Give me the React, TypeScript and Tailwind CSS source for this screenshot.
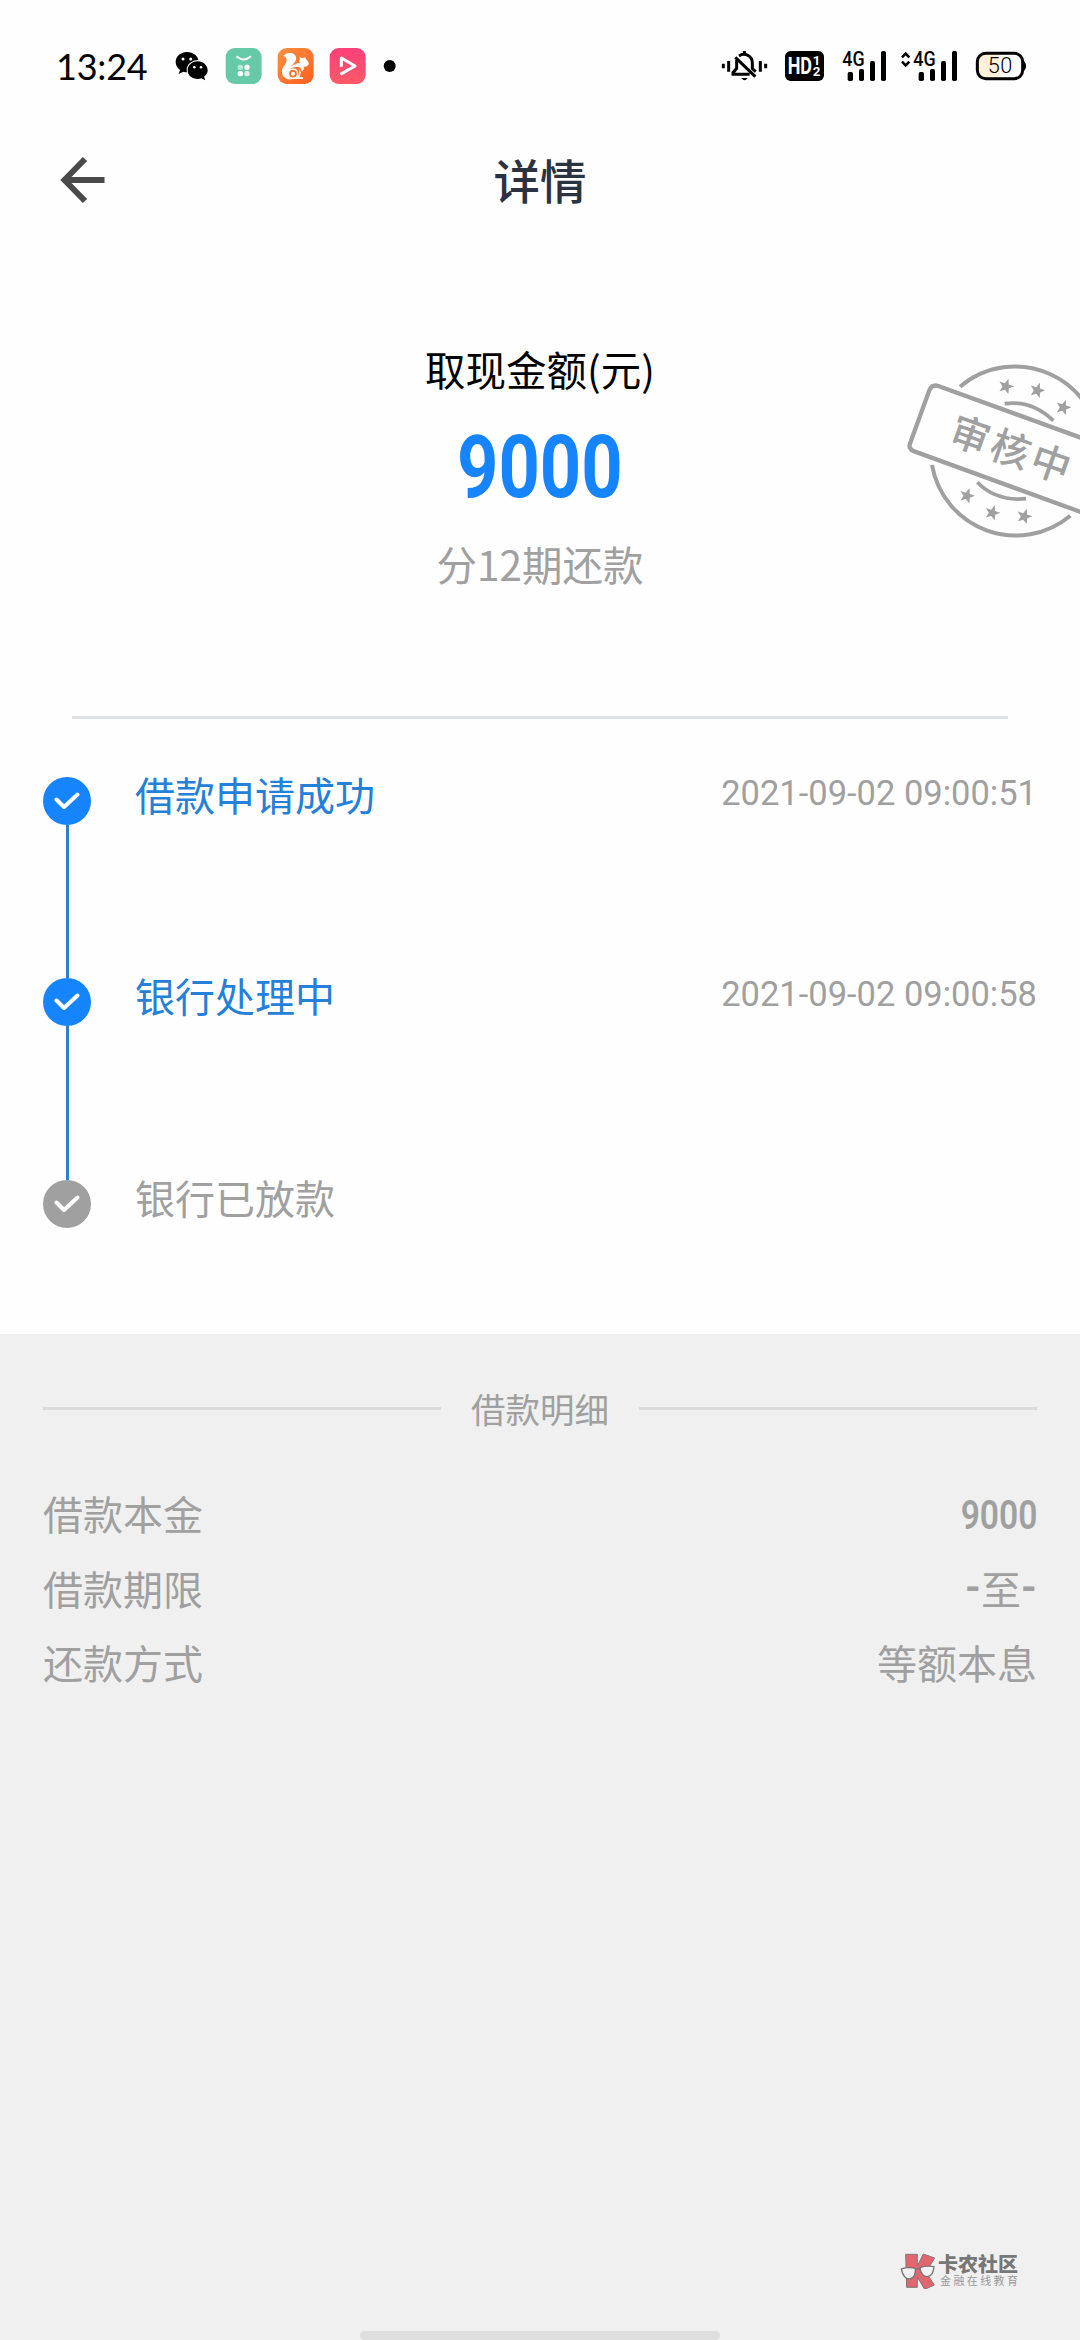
import { ReactNode } from 'react'

interface Step {
  label: string
  time?: string
  done: boolean
}

interface Detail {
  label: string
  value: ReactNode
}

const steps: Step[] = [
  { label: '借款申请成功', time: '2021-09-02 09:00:51', done: true },
  { label: '银行处理中', time: '2021-09-02 09:00:58', done: true },
  { label: '银行已放款', done: false }
]

const details: Detail[] = [
  {
    label: '借款本金',
    value: <span className="mt-[6px] origin-right scale-x-[.84] font-['Roboto',sans-serif] font-semibold">9000</span>
  },
  {
    label: '借款期限',
    value: (
      <span className="flex">
        <b className="flex w-[16px] justify-center font-['Roboto',sans-serif]">-</b>
        至
        <b className="flex w-[16px] justify-center font-['Roboto',sans-serif]">-</b>
      </span>
    )
  },
  { label: '还款方式', value: <span>等额本息</span> }
]

const STAR = '0,-24 6,-7.5 23,-7.5 10,3.5 14,20 0,10.5 -14,20 -10,3.5 -23,-7.5 -6,-7.5'

const AppIcons = () => (
  <svg width="228" height="80" viewBox="400 0 684 240" className="shrink-0">
    <defs>
      <linearGradient id="uc" x1="0" y1="0" x2="1" y2="1">
        <stop offset="0" stopColor="#fb9040" />
        <stop offset="1" stopColor="#f9601f" />
      </linearGradient>
      <linearGradient id="play" x1="0" y1="0" x2="0" y2="1">
        <stop offset="0" stopColor="#fb4079" />
        <stop offset="1" stopColor="#fd5965" />
      </linearGradient>
    </defs>

    {/* WeChat */}
    <path d="M442 66c-19 0-34 13-34 30 0 10 5 18 13 24l-4 12 14-7c4 1 8 2 12 2 19 0 34-14 34-31s-16-30-35-30z" />
    <ellipse cx="474" cy="120" rx="33" ry="30" fill="#fff" />
    <path d="M474 94c-17 0-30 12-30 27s13 26 30 26c4 0 8-1 11-2l12 6-4-11c7-5 11-11 11-19 0-15-13-27-30-27z" />
    <g fill="#fff">
      <circle cx="430" cy="87" r="4.5" />
      <circle cx="453" cy="87" r="4.5" />
      <circle cx="464" cy="112" r="3.8" />
      <circle cx="484" cy="112" r="3.8" />
    </g>

    {/* Green wallet */}
    <rect x="558" y="54" width="108" height="108" rx="27" fill="#66c9a8" />
    <path d="M590 79q22 19 44 0" fill="none" stroke="#fff" strokeWidth="6" />
    <g fill="#fff">
      <rect x="594" y="104" width="16" height="16" rx="6" opacity=".55" />
      <rect x="614" y="104" width="16" height="16" rx="6" />
      <rect x="594" y="123" width="16" height="16" rx="6" />
      <rect x="614" y="123" width="16" height="16" rx="6" opacity=".75" />
    </g>

    {/* Squirrel browser */}
    <rect x="714" y="54" width="108" height="108" rx="27" fill="url(#uc)" />
    <path d="M731 78c6-8 16-11 26-8 11 3 15 13 11 22-4 8-12 13-16 20 8-8 18-13 29-13-3-4-3-9 0-13l-2-6 8 5 10-3c1 5 2 6 5 9 3 2 6 7 5 12-2 6-9 8-15 7 2 5 0 10-4 14l-5-4c3-6-3-10-11-10-15 0-27 9-27 22 0 8 5 14 12 16-16 2-28-7-30-20-2-14 8-21 12-30 4-9 1-18-8-20z" fill="#fff" />
    <circle cx="760" cy="131" r="14" fill="none" stroke="#fff" strokeWidth="5" />
    <circle cx="760" cy="131" r="6" fill="#fff" />
    <path d="M778 116c7 8 6 18 1 26h11v5h-31c17-3 23-16 19-31z" fill="#fff" />

    {/* Video player */}
    <rect x="870" y="54" width="108" height="108" rx="27" fill="url(#play)" />
    <path d="M905 110V84l41 24-44 25" fill="none" stroke="#fff" strokeWidth="9" strokeLinejoin="round" />

    <circle cx="1050" cy="108" r="18" />
  </svg>
)

const SystemIcons = () => (
  <svg width="350" height="80" viewBox="0 0 1050 240" className="shrink-0">
    {/* Muted bell */}
    <g fill="none" stroke="#000" strokeWidth="9">
      <path d="M70 101v14M86 93v32M181 93v32M197 101v14" />
      <path d="M133 63v10M117 78c16-11 40-2 40 21v17l10 9M110 90v25l-11 13v5h50" />
      <path d="M106 82l60 58" />
    </g>
    <path d="M124 144h19q-9 14-19 0z" />

    {/* HD badge */}
    <rect x="255" y="63" width="117" height="90" rx="17" />
    <g fill="#fff" fontFamily="Roboto, sans-serif" fontWeight="700">
      <text x="263" y="132" fontSize="70" textLength="73" lengthAdjust="spacingAndGlyphs">HD</text>
      <text x="338" y="105" fontSize="40">1</text>
      <text x="338" y="139" fontSize="40">2</text>
    </g>

    {/* Signal */}
    <g fontFamily="Roboto, sans-serif" fontSize="60" fontWeight="500">
      <text x="427" y="107" textLength="67" lengthAdjust="spacingAndGlyphs">4G</text>
      <text x="640" y="107" textLength="67" lengthAdjust="spacingAndGlyphs">4G</text>
    </g>
    <path d="M606 82l11-11 11 11M606 95l11 11 11-11" fill="none" stroke="#000" strokeWidth="8" />
    {[443, 656].map((x) => (
      <g key={x}>
        <rect x={x} y="126" width="16" height="27" rx="5" />
        <rect x={x + 34} y="117" width="15" height="36" rx="5" />
        <rect x={x + 67} y="93" width="15" height="60" rx="5" />
        <rect x={x + 100} y="63" width="15" height="90" rx="5" />
      </g>
    ))}

    {/* Battery */}
    <path d="M900 70h-42q-26 0-26 26v24q0 26 26 26h42z" fill="#fdf1d9" />
    <rect x="832" y="70" width="136" height="76" rx="25" fill="none" stroke="#000" strokeWidth="9" />
    <path d="M970 93q8 4 8 15t-8 15z" />
    <text x="863" y="130" fontFamily="Roboto, sans-serif" fontWeight="300" fontSize="65" textLength="74">50</text>
  </svg>
)

const Stamp = () => (
  <svg width="190" height="200" viewBox="0 0 570 600" className="absolute top-[350px] right-0">
    <g fill="none" stroke="#a0a0a0" strokeWidth="12">
      <path d="M210 110A255 255 0 0 1 630 303" />
      <path d="M126 345A255 255 0 0 0 541 497" />
      <path d="M344 161Q425 150 490 212M262 397Q318 455 408 446" strokeWidth="11" />
      <path d="M600 273L145 108Q126 102 118 121L61 278Q53 297 73 304L600 496" strokeWidth="13" />
    </g>
    <g fill="#a0a0a0">
      {[[348, 109], [442, 121], [520, 172], [231, 437], [307, 488], [403, 499]].map(([x, y]) => (
        <polygon key={x} points={STAR} transform={`translate(${x} ${y}) rotate(18)`} />
      ))}
      <text
        x="0"
        y="0"
        transform="translate(171 276) rotate(19.5)"
        fontFamily="'Noto Sans CJK SC', sans-serif"
        fontSize="118"
        fontWeight="500"
        letterSpacing="10"
      >
        审核中
      </text>
    </g>
  </svg>
)

const Watermark = () => (
  <div className="absolute top-[2253px] left-[900px] flex gap-[3px]">
    <svg width="35" height="36" viewBox="58 66 105 108">
      <path d="M75 70h35v35l18-36 34 12-26 43 25 38-29 13-22-37v31H78z" fill="#e2666f" stroke="#8a7476" strokeWidth="3" />
      <path d="M62 114q20-7 42-2 2 28-17 32-18 1-25-30zM118 110q20-7 42-3-2 28-19 30-20 0-23-27z" fill="#f2f2f2" stroke="#777" strokeWidth="4" />
      <path d="M104 116q8-6 14-1" stroke="#777" strokeWidth="4" fill="none" />
    </svg>
    <div className="whitespace-nowrap">
      <div className="text-[20px] leading-[21px] font-black text-[#777]">卡农社区</div>
      <div className="pl-[2px] text-[11px] leading-[12px] tracking-[2.4px] text-[#999]">金融在线教育</div>
    </div>
  </div>
)

const CheckDot = ({ done }: { done: boolean }) => (
  <div className={`flex size-12 items-center justify-center rounded-full ${done ? 'bg-[#1684fc]' : 'bg-[#a0a0a0]'}`}>
    <svg width="26" height="18" viewBox="0 0 26 18" fill="none" stroke="#fff" strokeWidth="4" strokeLinecap="round" strokeLinejoin="round">
      <path d="M2.5 7.5L10 15 23.5 2.5" />
    </svg>
  </div>
)

const App = () => {
  return (
    <div className="relative flex h-[2340px] w-[1080px] flex-col overflow-hidden bg-[#fefefe] font-['Noto_Sans_CJK_SC',sans-serif] text-[40px] leading-[60px] text-[#a0a0a0]">
      {/* Status bar */}
      <div className="flex h-[110px] items-center justify-between pt-[30px] pr-[30px] pl-[56px] text-black">
        <div className="flex items-center">
          <span className="-mt-2 w-[117px] font-['Lato',sans-serif] text-[36px] leading-[80px] tracking-[-0.2px]">13:24</span>
          <AppIcons />
        </div>
        <SystemIcons />
      </div>

      {/* Title bar */}
      <div className="flex h-[140px] items-center px-[56px]">
        <button aria-label="返回" className="w-[52px]">
          <svg width="52" height="48" viewBox="0 0 52 48" fill="none" stroke="#4a4a4a" strokeWidth="6">
            <path d="M48.5 24H9M29 3L8.5 24 29 45" />
          </svg>
        </button>
        <h1 className="-mt-[3px] mr-[52px] flex-1 text-center text-[46.5px] font-medium text-[#2b3340]">详情</h1>
      </div>

      {/* Amount */}
      <div className="mx-[72px] flex h-[469px] flex-col items-center border-b-[3px] border-[#dfe2e4] pt-[89px] text-[40.5px]">
        <div className="text-black">取现金额(元)</div>
        <div className="mt-[23px] h-[90px] origin-center scale-x-[.83] font-['Roboto',sans-serif] text-[87px] leading-[90px] font-bold text-[#1684fc]">9000</div>
        <div className="mt-[22px]">分12期还款</div>
      </div>
      <Stamp />

      {/* Progress */}
      <div className="h-[615px] pt-[58px] pr-[43px] pl-[43px]">
        {steps.map((step, i) => (
          <div key={step.label} className="flex h-[201.3px]">
            <div className="flex w-12 flex-col items-center">
              <CheckDot done={step.done} />
              {i < steps.length - 1 && <div className="w-[3px] flex-1 bg-[#2f7fcb]" />}
            </div>
            <div className={`-mt-[13px] ml-[44px] flex-1 ${step.done ? 'text-[#2580d8]' : ''}`}>{step.label}</div>
            <div className="-mt-[14px] font-['Roboto',sans-serif] text-[34.5px]">{step.time}</div>
          </div>
        ))}
      </div>

      {/* Loan details */}
      <div className="flex-1 bg-[#f0f0f0] px-[43px] pt-[45px]">
        <div className="flex items-center gap-[30px]">
          <div className="h-[3px] flex-1 bg-[#dadada]" />
          <span className="-mt-px text-[34.5px]">借款明细</span>
          <div className="h-[3px] flex-1 bg-[#dadada]" />
        </div>
        <div className="mt-[38px]">
          {details.map((item) => (
            <div key={item.label} className="flex h-[74.4px] items-center justify-between">
              <span>{item.label}</span>
              {item.value}
            </div>
          ))}
        </div>
      </div>
      <Watermark />

      {/* Home indicator */}
      <div className="absolute bottom-0 left-[360px] h-[9px] w-[360px] rounded-full bg-[#dedede]" />
    </div>
  )
}

export default App
